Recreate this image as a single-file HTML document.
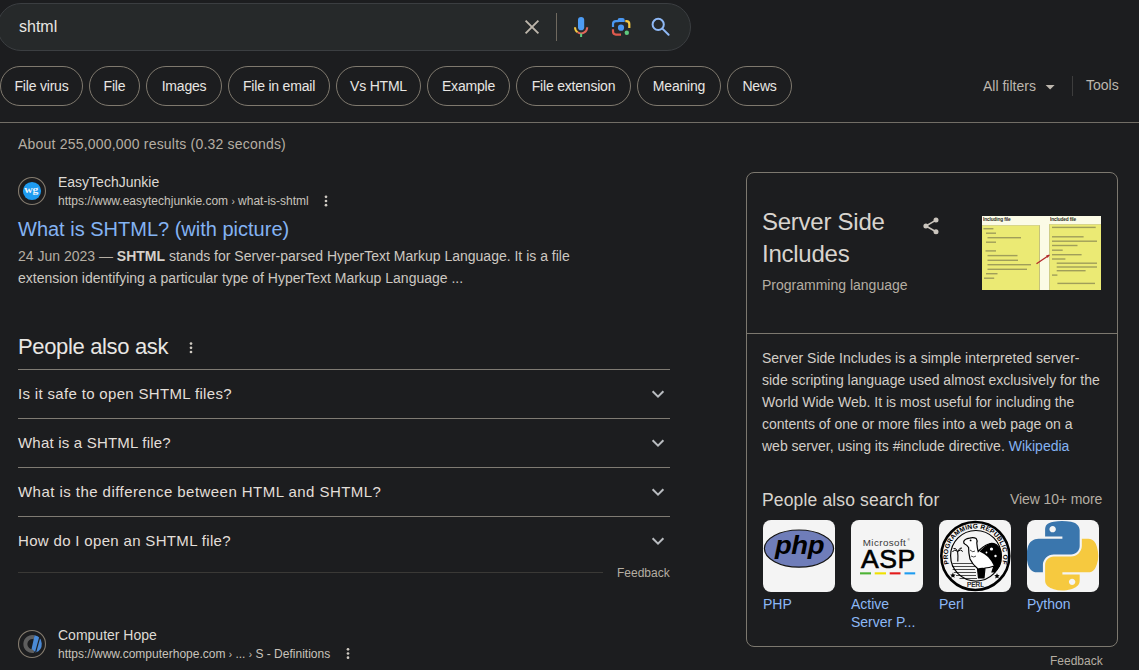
<!DOCTYPE html>
<html><head><meta charset="utf-8">
<style>
html,body{margin:0;padding:0;width:1139px;height:670px;overflow:hidden;background:#1c1d1f;font-family:"Liberation Sans",sans-serif;color:#e8e6e3;}
.a{position:absolute;white-space:nowrap;}
#sb{position:absolute;left:-3px;top:3px;width:694px;height:48px;border:1px solid #3b3e41;border-radius:24px;background:#26292a;box-sizing:border-box;}
.chip{position:absolute;top:66px;height:40px;border:1px solid #7f796e;border-radius:20px;box-sizing:border-box;font-size:14px;line-height:39px;text-align:center;color:#e8e6e3;letter-spacing:-0.2px;}
.hr{position:absolute;height:1px;background:#726e66;}
.paa{position:absolute;left:18px;font-size:15px;line-height:20px;color:#e3dfd9;}
.paal{position:absolute;left:18px;width:652px;height:1px;background:#7f7b73;}
.link{color:#84b3f3;}
.tile{position:absolute;top:520px;width:72px;height:72px;border-radius:8px;background:#f4f4f4;overflow:hidden;}
.tl{position:absolute;top:595px;font-size:14px;line-height:18px;color:#8cb8f6;}
#ov{position:absolute;left:0;top:0;}
</style></head><body>

<div id="sb"></div>
<div class="a" id="q" style="left:19px;top:17px;font-size:16px;line-height:20px;color:#e8e6e3;">shtml</div>

<!-- chips -->
<div class="chip" style="left:0px;width:83px;">File virus</div>
<div class="chip" style="left:89px;width:51px;">File</div>
<div class="chip" style="left:146px;width:76px;">Images</div>
<div class="chip" style="left:228px;width:102px;">File in email</div>
<div class="chip" style="left:336px;width:85px;">Vs HTML</div>
<div class="chip" style="left:427px;width:83px;">Example</div>
<div class="chip" style="left:516px;width:115px;">File extension</div>
<div class="chip" style="left:637px;width:84px;">Meaning</div>
<div class="chip" style="left:727px;width:65px;">News</div>

<div class="a" id="af" style="left:983px;top:78px;font-size:14px;line-height:16px;color:#bdb7ae;">All filters</div>
<div class="a" id="tools" style="left:1086px;top:77px;font-size:14px;line-height:16px;color:#bdb7ae;">Tools</div>
<div class="hr" style="left:0;top:122px;width:1139px;"></div>

<div class="a" id="cnt" style="left:18px;top:136px;font-size:14px;line-height:16px;color:#b5aea3;letter-spacing:0.2px;">About 255,000,000 results (0.32 seconds)</div>

<!-- result 1 -->
<div class="a" style="left:58px;top:174px;font-size:14px;line-height:16px;color:#dedad4;">EasyTechJunkie</div>
<div class="a" id="u1" style="left:58px;top:194px;font-size:12px;line-height:14px;color:#c8c3bc;">https://www.easytechjunkie.com <span style="font-size:10px">›</span> what-is-shtml</div>
<div class="a link" style="left:18px;top:217px;font-size:20px;line-height:24px;">What is SHTML? (with picture)</div>
<div class="a" style="left:18px;top:245px;font-size:14px;line-height:22px;color:#cdc8c1;"><span style="color:#b5aea3">24 Jun 2023 — </span><b style="color:#d6d1ca">SHTML</b> stands for Server-parsed HyperText Markup Language. It is a file<br>extension identifying a particular type of HyperText Markup Language ...</div>

<!-- PAA -->
<div class="a" id="paah" style="left:18px;top:334px;font-size:22px;line-height:26px;letter-spacing:-0.35px;color:#e8e6e3;">People also ask</div>
<div class="paal" style="top:369px;"></div>
<div class="paa" id="p1" style="top:384px;letter-spacing:0.33px;">Is it safe to open SHTML files?</div>
<div class="paal" style="top:418px;"></div>
<div class="paa" id="p2" style="top:433px;letter-spacing:0.2px;">What is a SHTML file?</div>
<div class="paal" style="top:467px;"></div>
<div class="paa" id="p3" style="top:482px;letter-spacing:0.45px;">What is the difference between HTML and SHTML?</div>
<div class="paal" style="top:516px;"></div>
<div class="paa" id="p4" style="top:531px;letter-spacing:0.33px;">How do I open an SHTML file?</div>
<div class="paal" style="top:572px;width:585px;background:#3a3936;"></div>
<div class="a" id="fb1" style="left:617px;top:566px;font-size:12px;line-height:14px;color:#b5aea3;">Feedback</div>

<!-- result 2 -->
<div class="a" style="left:58px;top:627px;font-size:14px;line-height:16px;color:#dedad4;">Computer Hope</div>
<div class="a" id="u2" style="left:58px;top:647px;font-size:12px;line-height:14px;color:#c8c3bc;">https://www.computerhope.com <span style="font-size:10px">›</span> ... <span style="font-size:10px">›</span> S - Definitions</div>

<!-- knowledge panel -->
<div style="position:absolute;left:746px;top:172px;width:372px;height:475px;border:1px solid #7c786f;border-radius:8px;box-sizing:border-box;"></div>
<div class="hr" style="left:747px;top:333px;width:370px;background:#7c786f;"></div>
<div class="a" id="kt" style="left:762px;top:206px;font-size:24px;line-height:32px;color:#d8d4ce;letter-spacing:-0.25px;">Server Side<br>Includes</div>
<div class="a" style="left:762px;top:277px;font-size:14px;line-height:16px;color:#b5aea3;">Programming language</div>
<div class="a" style="left:762px;top:347px;font-size:14px;line-height:22px;color:#d3cec7;">Server Side Includes is a simple interpreted server-<br>side scripting language used almost exclusively for the<br>World Wide Web. It is most useful for including the<br>contents of one or more files into a web page on a<br>web server, using its #include directive. <span class="link">Wikipedia</span></div>
<div class="a" id="pasf" style="left:762px;top:490px;font-size:17.5px;line-height:20px;letter-spacing:0.15px;color:#d8d4ce;">People also search for</div>
<div class="a" id="v10" style="left:1010px;top:491px;font-size:14px;line-height:16px;color:#b5aea3;letter-spacing:-0.1px;">View 10+ more</div>

<div class="tile" style="left:763px;"></div>
<div class="tile" style="left:851px;"></div>
<div class="tile" style="left:939px;"></div>
<div class="tile" style="left:1027px;"></div>
<div class="tl" style="left:763px;">PHP</div>
<div class="tl" style="left:851px;">Active<br>Server P...</div>
<div class="tl" style="left:939px;">Perl</div>
<div class="tl" style="left:1027px;">Python</div>
<div class="a" id="fb2" style="left:1050px;top:654px;font-size:12px;line-height:14px;color:#b5aea3;">Feedback</div>

<!--IMG-->
<!-- panel image -->
<div style="position:absolute;left:982px;top:216px;width:119px;height:74px;background:#fbfbe6;overflow:hidden;">
<div style="position:absolute;left:1px;top:0px;font-size:5.6px;line-height:6px;font-weight:bold;color:#2a2a20;letter-spacing:-0.15px;transform:scale(0.85,1);transform-origin:0 0;">Including file</div>
<div style="position:absolute;left:67.5px;top:0px;font-size:5.6px;line-height:6px;font-weight:bold;color:#2a2a20;letter-spacing:-0.15px;transform:scale(0.85,1);transform-origin:0 0;">Included file</div>
<div style="position:absolute;left:0;top:8.5px;width:56.5px;height:64px;background:#ebea74;border-right:1px solid #c4c27c;border-top:1px solid #d8d68a;"></div>
<div style="position:absolute;left:66.5px;top:8px;width:52.5px;height:65px;background:#ebea74;border-left:1px solid #d0ce86;border-top:1px solid #d8d68a;"></div>
</div>
<svg style="position:absolute;left:0;top:0" width="1139" height="670">
<g fill="#a09e5a">
<rect x="983.4" y="228" width="10" height="1.4"/>
<rect x="986" y="232.5" width="10" height="1.4"/>
<rect x="987.5" y="237" width="33.5" height="1.4"/>
<rect x="986" y="241.5" width="10" height="1.4"/>
<rect x="985.5" y="250.2" width="10.5" height="1.4"/>
<rect x="987.5" y="254.9" width="30" height="1.4"/>
<rect x="987.5" y="259.6" width="30.5" height="1.4"/>
<rect x="987.5" y="264" width="43.5" height="1.4"/>
<rect x="987.5" y="268.6" width="39.5" height="1.4"/>
<rect x="986" y="273" width="11.5" height="1.4"/>
<rect x="984" y="277.5" width="10.2" height="1.4"/>
<rect x="1052" y="226.7" width="43.7" height="1.4"/>
<rect x="1052" y="236.1" width="31.6" height="1.4"/>
<rect x="1052" y="240.5" width="45" height="1.4"/>
<rect x="1052" y="244.8" width="25.5" height="1.4"/>
<rect x="1052" y="249.5" width="10.7" height="1.4"/>
<rect x="1052" y="254" width="29.6" height="1.4"/>
<rect x="1052" y="258.3" width="13.4" height="1.4"/>
<rect x="1056.7" y="262.5" width="40.3" height="1.4"/>
<rect x="1056.7" y="266.3" width="40.3" height="1.4"/>
<rect x="1056.7" y="270" width="28.9" height="1.4"/>
<rect x="1052" y="274.4" width="5.4" height="1.4"/>
<rect x="1057.4" y="282.7" width="37.6" height="1.4"/>
</g>
<path d="M1036.5 263.8 L1049.4 255" stroke="#b2282a" stroke-width="1.3"/>
<path d="M1049.6 254.8 L1046 255.6 L1047.8 258 Z" fill="#b2282a"/>
</svg>

<!-- PHP -->
<svg style="position:absolute;left:763px;top:520px" width="72" height="72">
<ellipse cx="36" cy="28.6" rx="34.6" ry="18.6" fill="#6f7db9" stroke="#141414" stroke-width="1.2"/>
<text transform="translate(36.6,34.4) scale(1.1,1)" x="0" y="0" font-family="Liberation Sans" font-weight="bold" font-style="italic" font-size="25" fill="#000" text-anchor="middle" letter-spacing="-0.3">php</text>
</svg>
<!-- ASP -->
<svg style="position:absolute;left:851px;top:520px" width="72" height="72">
<text x="11.8" y="25.5" font-family="Liberation Sans" font-size="9.8" fill="#3a3a3a" letter-spacing="0.4">Microsoft</text>
<text x="56.6" y="20.6" font-family="Liberation Sans" font-size="3" fill="#2b2b2b">®</text>
<text x="10" y="47.8" font-family="Liberation Sans" font-size="26.6" fill="#000" stroke="#000" stroke-width="0.6" letter-spacing="0.5">ASP</text>
<rect x="9" y="52.3" width="11" height="2.1" fill="#4db335"/>
<rect x="23.7" y="52.3" width="11.3" height="2.1" fill="#f0e000"/>
<rect x="38.7" y="52.3" width="10.8" height="2.1" fill="#e31b1b"/>
<rect x="53.5" y="52.3" width="10.7" height="2.1" fill="#1e9cf0"/>
</svg>
<!-- Perl -->
<svg style="position:absolute;left:939px;top:520px" width="72" height="72">
<circle cx="36.3" cy="36" r="34" fill="none" stroke="#000" stroke-width="2.6"/>
<circle cx="36.9" cy="35.8" r="25.3" fill="none" stroke="#000" stroke-width="1.2"/>
<text transform="translate(9.50,41.74) rotate(-102.0)" text-anchor="middle" font-family="Liberation Sans" font-weight="bold" font-size="6.6" fill="#000">P</text>
<text transform="translate(8.92,36.99) rotate(-92.1)" text-anchor="middle" font-family="Liberation Sans" font-weight="bold" font-size="6.6" fill="#000">R</text>
<text transform="translate(9.21,31.86) rotate(-81.4)" text-anchor="middle" font-family="Liberation Sans" font-weight="bold" font-size="6.6" fill="#000">O</text>
<text transform="translate(10.52,26.70) rotate(-70.3)" text-anchor="middle" font-family="Liberation Sans" font-weight="bold" font-size="6.6" fill="#000">G</text>
<text transform="translate(12.69,22.04) rotate(-59.6)" text-anchor="middle" font-family="Liberation Sans" font-weight="bold" font-size="6.6" fill="#000">R</text>
<text transform="translate(15.58,18.00) rotate(-49.3)" text-anchor="middle" font-family="Liberation Sans" font-weight="bold" font-size="6.6" fill="#000">A</text>
<text transform="translate(19.42,14.32) rotate(-38.2)" text-anchor="middle" font-family="Liberation Sans" font-weight="bold" font-size="6.6" fill="#000">M</text>
<text transform="translate(24.23,11.28) rotate(-26.4)" text-anchor="middle" font-family="Liberation Sans" font-weight="bold" font-size="6.6" fill="#000">M</text>
<text transform="translate(27.80,9.81) rotate(-18.4)" text-anchor="middle" font-family="Liberation Sans" font-weight="bold" font-size="6.6" fill="#000">I</text>
<text transform="translate(31.18,8.92) rotate(-11.1)" text-anchor="middle" font-family="Liberation Sans" font-weight="bold" font-size="6.6" fill="#000">N</text>
<text transform="translate(36.30,8.40) rotate(-0.4)" text-anchor="middle" font-family="Liberation Sans" font-weight="bold" font-size="6.6" fill="#000">G</text>
<text transform="translate(43.41,9.28) rotate(14.5)" text-anchor="middle" font-family="Liberation Sans" font-weight="bold" font-size="6.6" fill="#000">R</text>
<text transform="translate(47.91,10.87) rotate(24.4)" text-anchor="middle" font-family="Liberation Sans" font-weight="bold" font-size="6.6" fill="#000">E</text>
<text transform="translate(51.92,13.11) rotate(34.0)" text-anchor="middle" font-family="Liberation Sans" font-weight="bold" font-size="6.6" fill="#000">P</text>
<text transform="translate(55.64,16.12) rotate(43.9)" text-anchor="middle" font-family="Liberation Sans" font-weight="bold" font-size="6.6" fill="#000">U</text>
<text transform="translate(58.89,19.86) rotate(54.2)" text-anchor="middle" font-family="Liberation Sans" font-weight="bold" font-size="6.6" fill="#000">B</text>
<text transform="translate(61.26,23.80) rotate(63.8)" text-anchor="middle" font-family="Liberation Sans" font-weight="bold" font-size="6.6" fill="#000">L</text>
<text transform="translate(62.48,26.68) rotate(70.3)" text-anchor="middle" font-family="Liberation Sans" font-weight="bold" font-size="6.6" fill="#000">I</text>
<text transform="translate(63.45,30.04) rotate(77.5)" text-anchor="middle" font-family="Liberation Sans" font-weight="bold" font-size="6.6" fill="#000">C</text>
<text transform="translate(64.07,37.18) rotate(92.4)" text-anchor="middle" font-family="Liberation Sans" font-weight="bold" font-size="6.6" fill="#000">O</text>
<text transform="translate(63.46,41.92) rotate(102.4)" text-anchor="middle" font-family="Liberation Sans" font-weight="bold" font-size="6.6" fill="#000">F</text>
<text x="36.4" y="67" font-family="Liberation Sans" font-size="6.4" fill="#000" stroke="#000" stroke-width="0.2" text-anchor="middle">PERL</text>
<path d="M13.9 52.6 l0.8 1.8 1.9.2-1.4 1.3.4 1.9-1.7-1-1.7 1 .4-1.9-1.4-1.3 1.9-.2z" fill="#000"/>
<path d="M58 53.2 l0.8 1.8 1.9.2-1.4 1.3.4 1.9-1.7-1-1.7 1 .4-1.9-1.4-1.3 1.9-.2z" fill="#000"/>
<g stroke="#000" stroke-width="0.7">
<path d="M13.5 43.5 H36 M13 46.5 H36 M13.6 49.5 H36 M14.8 52.5 H37 M17 55.5 H37 M20.5 58.5 H38"/>
</g>
<path d="M18.8 41.5 Q19.2 36 18.6 31.5" stroke="#000" stroke-width="1.1" fill="none"/>
<path d="M18.6 31.5 Q15 29 13.5 32 M18.6 31.5 Q22 28.5 23.8 31.5 M18.6 31.5 Q17 27.5 14.5 28.5 M18.6 31.5 Q21 27 23 28" stroke="#000" stroke-width="1" fill="none"/>
<path d="M24.7 21.7 Q25.5 18.8 30.6 18.1 Q34.5 17 37.2 18.6 Q38.6 20.5 37.8 23 Q38.2 28 39.2 31.5 Q44 26 49.7 24 Q53.3 22.5 57 24.5 Q61.8 28 62.3 35.4 Q62.3 42 60.5 46 L56 52 L53 52 L55 46 Q50 48 46 48 L45 58 L39.5 58 L38.5 48.5 Q33.5 44.5 31 39 Q29.5 33 29.6 27.5 Q28 24.8 25.8 24 Q24.5 23.3 24.7 21.7 Z" fill="#fff" stroke="#000" stroke-width="1.2"/>
<path d="M40.5 31.5 Q44.5 26.5 49.7 24 Q53.3 22.5 57 24.5 Q61.8 28 62.3 35.4 Q62.3 42 60.5 46 L56 52 L53 52 L55 46 Q52 40 49 37 Q45 33.5 40.5 31.5 Z" fill="#000"/>
<circle cx="52.5" cy="29" r="1.6" fill="#fff"/><circle cx="56.5" cy="36" r="1.2" fill="#fff"/><circle cx="47.5" cy="32.5" r="0.9" fill="#fff"/>
<path d="M38.5 48.5 L39.5 58 L45 58 L46 48 Q42 47.5 38.5 48.5 Z" fill="#000"/>
<path d="M31 30 Q34 33 36 31 M32 36 Q35 38 37 36" stroke="#000" stroke-width="0.7" fill="none"/>
<circle cx="31.6" cy="20.4" r="0.9" fill="#000"/>
</svg>
<!-- Python -->
<svg style="position:absolute;left:1027px;top:520px" width="72" height="72" viewBox="0 0 72 72">
<g transform="translate(-0.4,1.0) scale(0.645,0.618)">
<path fill="#3a76ad" fill-rule="evenodd" d="M54.9,0C50.3,0 46,0.4 42.1,1.1 30.8,3.1 28.7,7.3 28.7,15v10.2h26.8v3.4H28.7 18.6c-7.8,0-14.6,4.7-16.7,13.6-2.5,10.2-2.6,16.6 0,27.3 1.9,7.9 6.5,13.6 14.2,13.6h9.2V70.8c0-8.8 7.7-16.7 16.8-16.7h26.8c7.5,0 13.4-6.1 13.4-13.6V15c0-7.3-6.1-12.7-13.4-13.9C64.3,0.3 59.5,0 54.9,0Z M40.4,8.2c2.8,0 5,2.3 5,5.1 0,2.8-2.3,5.1-5,5.1-2.8,0-5-2.3-5-5.1 0-2.8 2.3-5.1 5-5.1Z"/>
<path fill="#f6c93f" fill-rule="evenodd" d="M85.6,28.7v11.9c0,9.2-7.8,17-16.8,17H42.1c-7.3,0-13.4,6.3-13.4,13.6v25.5c0,7.3 6.3,11.5 13.4,13.6 8.5,2.5 16.6,2.9 26.8,0 6.8-2 13.4-5.9 13.4-13.6V86.5H55.5v-3.4h26.8 13.4c7.8,0 10.7-5.4 13.4-13.6 2.8-8.4 2.7-16.5 0-27.3-1.9-7.8-5.6-13.6-13.4-13.6Z M70.6,93.3c2.8,0 5,2.3 5,5.1 0,2.8-2.3,5.1-5,5.1-2.8,0-5-2.3-5-5.1 0-2.8 2.3-5.1 5-5.1Z"/>
</g>
</svg>
<!--/IMG-->

<svg id="ov" width="1139" height="670" viewBox="0 0 1139 670">
<!-- clear X -->
<path d="M525.6 20.6 L538.4 33.4 M538.4 20.6 L525.6 33.4" stroke="#bdb6ab" stroke-width="1.9" fill="none"/>
<!-- divider -->
<rect x="556" y="13" width="1" height="28" fill="#6f695f"/>
<!-- mic -->
<rect x="578" y="17" width="6.2" height="13.3" rx="3.1" fill="#4d9cf4"/>
<path d="M575 27.3 A6.1 6.1 0 0 0 577.6 32.3" stroke="#f5c842" stroke-width="2" fill="none"/>
<path d="M577.6 32.3 A6.1 6.1 0 0 0 587.2 27.3" stroke="#e2675a" stroke-width="2" fill="none"/>
<rect x="580.1" y="33.6" width="2" height="3.4" fill="#5fca7f"/>
<!-- lens -->
<path d="M613 26.9 V24.1 A3 3 0 0 1 616 21.1 H618.6" stroke="#4a98f2" stroke-width="2.2" fill="none"/>
<path d="M617.6 22 V20 A2.1 2.1 0 0 1 619.7 17.9 H622.6 A2.1 2.1 0 0 1 624.7 20 V22 Z" fill="#4a98f2"/>
<path d="M625.3 21.1 H626.3 A3 3 0 0 1 629.3 24.1 V27.9" stroke="#f5c842" stroke-width="2.2" fill="none"/>
<path d="M613 29.2 V31.6 A3 3 0 0 0 616 34.6 H621" stroke="#e05a4e" stroke-width="2.2" fill="none"/>
<circle cx="621" cy="27.7" r="3.1" fill="#4a98f2"/>
<circle cx="626.8" cy="32.8" r="2.2" fill="#5fca7f"/>
<!-- search -->
<circle cx="658.2" cy="24.4" r="5.6" stroke="#8fb9f6" stroke-width="2" fill="none"/>
<path d="M662.4 28.6 L668.6 34.8" stroke="#8fb9f6" stroke-width="2" fill="none" stroke-linecap="round"/>
<!-- all filters triangle, divider -->
<path d="M1045.6 85 H1054.6 L1050.1 89.6 Z" fill="#bdb7ae"/>
<rect x="1072" y="76" width="1" height="20" fill="#3d3d3d"/>
<!-- favicon 1 -->
<circle cx="32" cy="191" r="13.5" stroke="#847b6e" stroke-width="1.1" fill="none"/>
<circle cx="32" cy="191" r="9.1" fill="#1e9bf0"/>
<text transform="translate(31.2,192.9) scale(1.22,1)" x="0" y="0" font-family="Liberation Serif" font-size="9.6" font-weight="bold" fill="#eef4fa" text-anchor="middle" letter-spacing="-0.2">wg</text>
<!-- dots menu 1 -->
<circle cx="326" cy="196.8" r="1.35" fill="#cfcac2"/><circle cx="326" cy="201" r="1.35" fill="#cfcac2"/><circle cx="326" cy="205.2" r="1.35" fill="#cfcac2"/>
<!-- PAA dots -->
<circle cx="191" cy="343.6" r="1.35" fill="#cfcac2"/><circle cx="191" cy="347.8" r="1.35" fill="#cfcac2"/><circle cx="191" cy="352" r="1.35" fill="#cfcac2"/>
<!-- chevrons -->
<path d="M652.6 391.2 L658 396.6 L663.4 391.2" stroke="#b9bcc0" stroke-width="2" fill="none"/>
<path d="M652.6 440.2 L658 445.6 L663.4 440.2" stroke="#b9bcc0" stroke-width="2" fill="none"/>
<path d="M652.6 489.2 L658 494.6 L663.4 489.2" stroke="#b9bcc0" stroke-width="2" fill="none"/>
<path d="M652.6 538.2 L658 543.6 L663.4 538.2" stroke="#b9bcc0" stroke-width="2" fill="none"/>
<!-- favicon 2 -->
<circle cx="32" cy="644" r="13.5" stroke="#847b6e" stroke-width="1.1" fill="none"/>
<path d="M34.2 637.3 A7 7 0 1 0 33.8 650.9" stroke="#5e5e5e" stroke-width="4" fill="none"/>
<path d="M34.6 635.3 A8.9 8.9 0 0 1 35.6 652.5 L31.6 648.8 Z" fill="#4a8ad6"/>
<path d="M40.4 634.8 L35.6 652.4" stroke="#1c1d1f" stroke-width="1.2"/>
<!-- dots menu 2 -->
<circle cx="348" cy="649.3" r="1.35" fill="#cfcac2"/><circle cx="348" cy="653.5" r="1.35" fill="#cfcac2"/><circle cx="348" cy="657.7" r="1.35" fill="#cfcac2"/>
<!-- share -->
<path d="M936 220.1 L925.9 226 L936 231.8" stroke="#cac5bd" stroke-width="1.6" fill="none"/>
<circle cx="936" cy="220.1" r="2.5" fill="#cac5bd"/>
<circle cx="925.9" cy="226" r="2.5" fill="#cac5bd"/>
<circle cx="936" cy="231.8" r="2.5" fill="#cac5bd"/>
</svg>
</body></html>
